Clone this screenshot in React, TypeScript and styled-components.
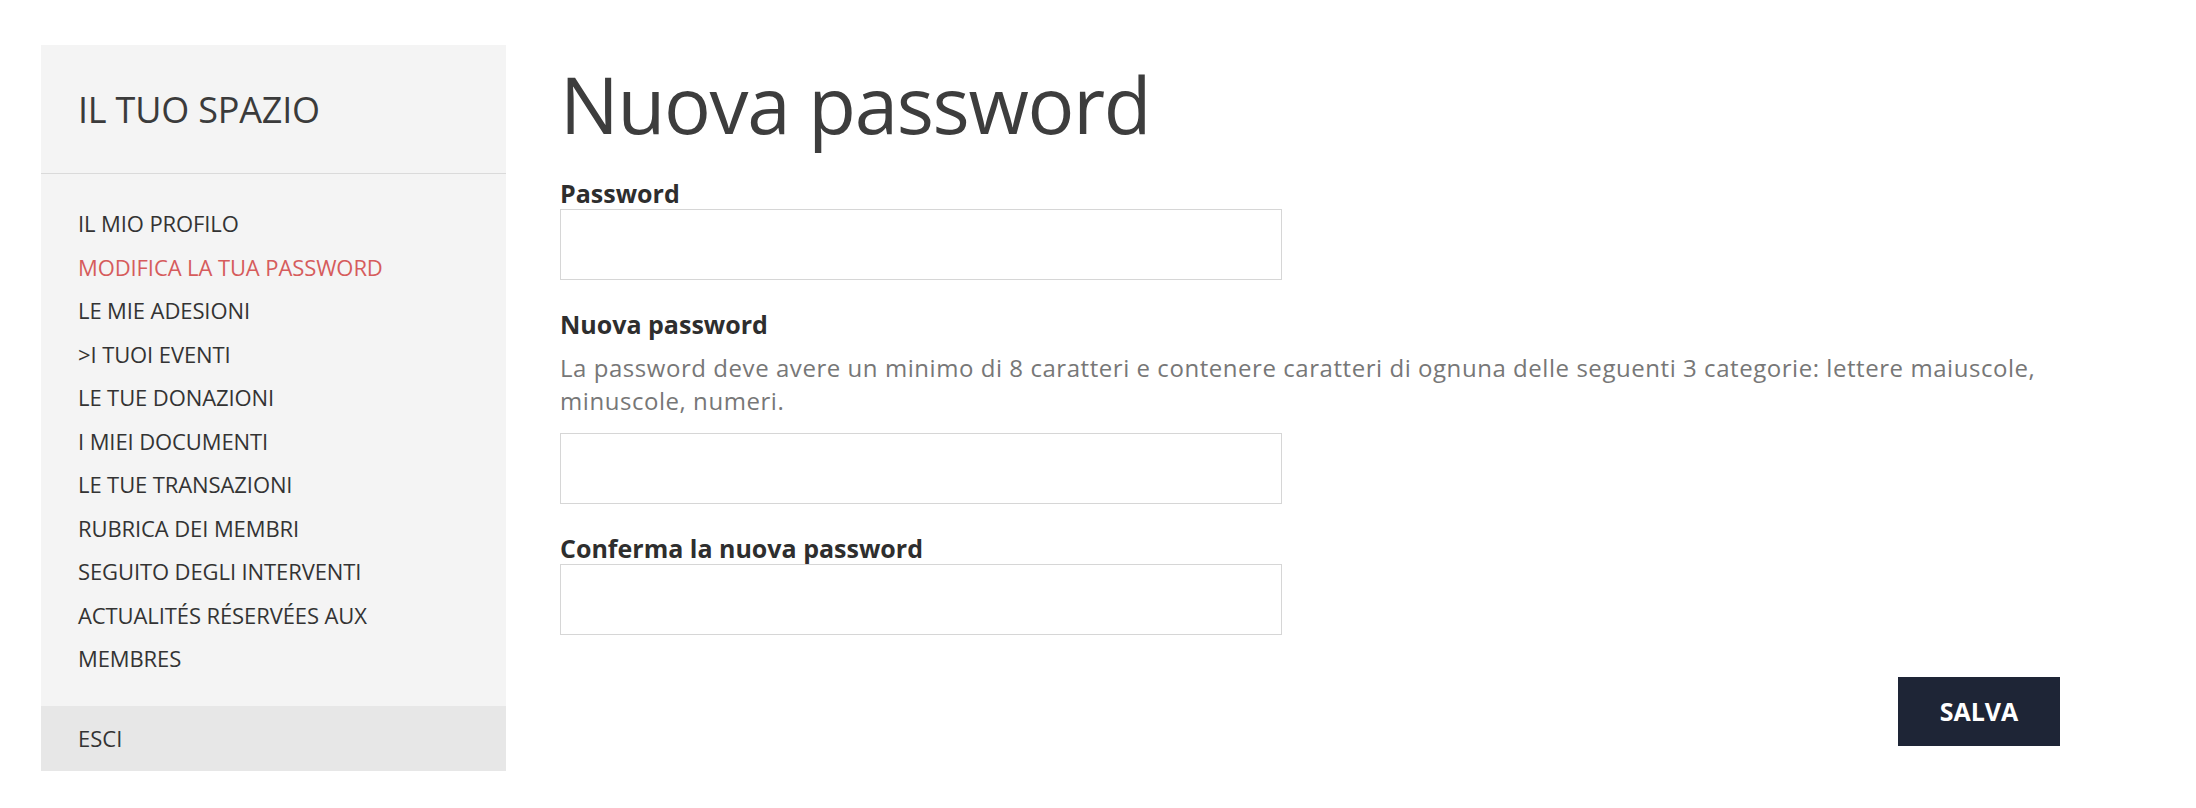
import styled, { createGlobalStyle } from "styled-components";

const GlobalStyle = createGlobalStyle`
  * {
    box-sizing: border-box;
  }
  body {
    margin: 0;
    background: #ffffff;
    font-family: "Open Sans", "Liberation Sans", sans-serif;
    color: #333333;
  }
`;

const menuItems = [
  { label: "IL MIO PROFILO" },
  { label: "MODIFICA LA TUA PASSWORD", active: true },
  { label: "LE MIE ADESIONI" },
  { label: ">I TUOI EVENTI" },
  { label: "LE TUE DONAZIONI" },
  { label: "I MIEI DOCUMENTI" },
  { label: "LE TUE TRANSAZIONI" },
  { label: "RUBRICA DEI MEMBRI" },
  { label: "SEGUITO DEGLI INTERVENTI" },
  { label: "ACTUALITÉS RÉSERVÉES AUX MEMBRES" },
];

const App = () => {
  return (
    <>
      <GlobalStyle />
      <Page>
        <Sidebar>
          <SidebarHeader>
            <SidebarTitle>IL TUO SPAZIO</SidebarTitle>
          </SidebarHeader>
          <Menu>
            {menuItems.map((item) => (
              <MenuItem key={item.label} $active={!!item.active}>
                {item.label}
              </MenuItem>
            ))}
          </Menu>
          <Logout>ESCI</Logout>
        </Sidebar>
        <Main>
          <Title>Nuova password</Title>
          <Form onSubmit={(e) => e.preventDefault()}>
            <Field>
              <Label htmlFor="old-password">Password</Label>
              <Input id="old-password" type="password" />
            </Field>
            <Field>
              <Label htmlFor="new-password">Nuova password</Label>
              <Hint>
                La password deve avere un minimo di 8 caratteri e contenere caratteri di
                ognuna delle seguenti 3 categorie: lettere maiuscole, minuscole, numeri.
              </Hint>
              <Input id="new-password" type="password" />
            </Field>
            <Field>
              <Label htmlFor="confirm-password">Conferma la nuova password</Label>
              <Input id="confirm-password" type="password" />
            </Field>
            <Actions>
              <SaveButton type="submit">SALVA</SaveButton>
            </Actions>
          </Form>
        </Main>
      </Page>
    </>
  );
};

export default App;

const Page = styled.div`
  display: flex;
  align-items: flex-start;
  gap: 54px;
  padding: 45px 0 0 41px;
`;

const Sidebar = styled.aside`
  width: 465px;
  flex-shrink: 0;
  background: #f4f4f4;
`;

const SidebarHeader = styled.div`
  height: 129px;
  display: flex;
  align-items: center;
  padding: 0 37px;
  border-bottom: 1px solid #dadada;
`;

const SidebarTitle = styled.h2`
  margin: 0;
  font-size: 36px;
  font-weight: 400;
  color: #3b3b3b;
  letter-spacing: -0.2px;
`;

const Menu = styled.ul`
  list-style: none;
  margin: 0;
  padding: 28px 70px 25px 37px;
`;

const MenuItem = styled.li<{ $active: boolean }>`
  font-size: 22px;
  line-height: 43.5px;
  color: ${({ $active }) => ($active ? "#d65c5c" : "#333333")};
  letter-spacing: -0.1px;
  cursor: pointer;
`;

const Logout = styled.div`
  height: 65px;
  display: flex;
  align-items: center;
  padding: 0 37px;
  background: #e7e7e7;
  font-size: 22px;
  color: #333333;
  cursor: pointer;
`;

const Main = styled.main`
  width: 1500px;
`;

const Title = styled.h1`
  margin: 13px 0 0;
  font-size: 78px;
  line-height: 1.2;
  font-weight: 400;
  letter-spacing: -1.3px;
  color: #3d3d3d;
`;

const Form = styled.form`
  display: flex;
  flex-direction: column;
  gap: 30px;
  margin-top: 27px;
`;

const Field = styled.div`
  display: flex;
  flex-direction: column;
`;

const Label = styled.label`
  font-size: 25px;
  line-height: 28px;
  font-weight: 700;
  color: #2e2e2e;
  margin-bottom: 2px;
`;

const Hint = styled.p`
  margin: 11px 0 16px;
  font-size: 24px;
  line-height: 33px;
  letter-spacing: 0.55px;
  color: #777777;
`;

const Input = styled.input`
  width: 722px;
  height: 71px;
  border: 1px solid #d6d6d6;
  background: #ffffff;
  padding: 0 16px;
  font-size: 20px;
  outline: none;
`;

const Actions = styled.div`
  display: flex;
  justify-content: flex-end;
  margin-top: 12px;
`;

const SaveButton = styled.button`
  width: 162px;
  height: 69px;
  border: none;
  background: #1e2536;
  color: #ffffff;
  font-family: "Open Sans", "Liberation Sans", sans-serif;
  font-size: 25px;
  font-weight: 700;
  cursor: pointer;
`;
